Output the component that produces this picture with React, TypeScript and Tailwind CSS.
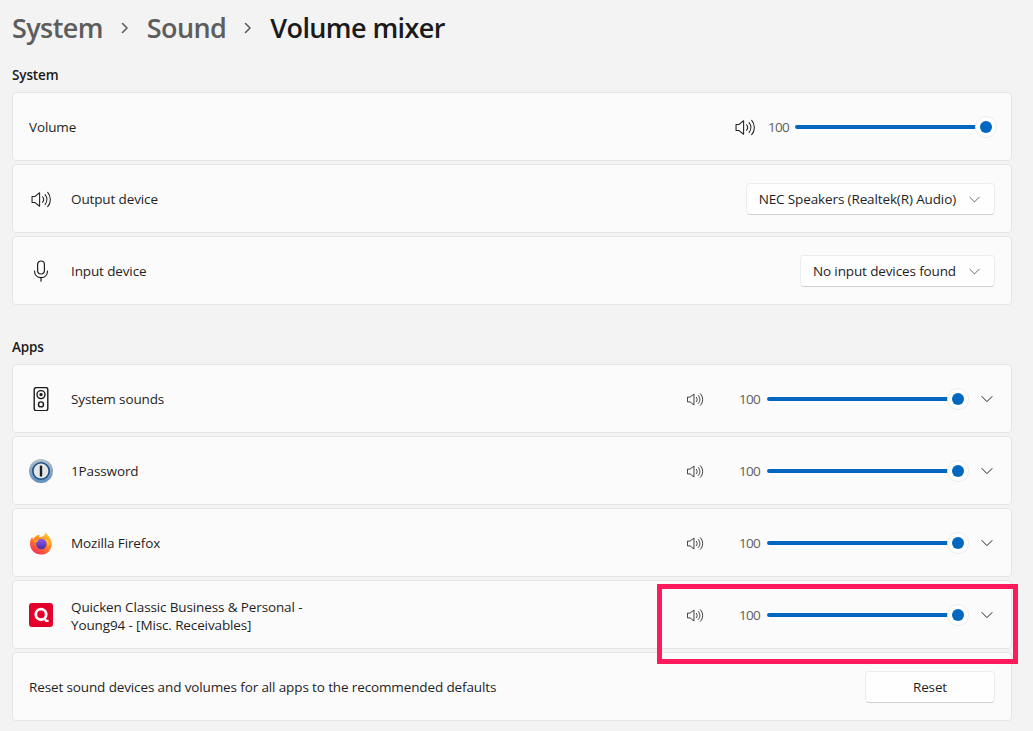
import React from 'react';

const SpeakerIcon: React.FC<{ size: number }> = ({ size }) => (
  <svg width={size} height={size} viewBox="0 0 20 20" fill="none" stroke="#1f1f1f" strokeWidth={size > 16 ? 1 : 1.2} strokeLinejoin="round" strokeLinecap="round">
    <path d="M1 7.2h2.6L8.2 3.6v12.8L3.6 12.8H1z" />
    <path d="M11 7.4c1.3 1.5 1.3 3.7 0 5.2" />
    <path d="M13.4 5.4c2.3 2.7 2.3 6.5 0 9.2" />
    <path d="M15.9 3.2c3.4 3.9 3.4 9.7 0 13.6" />
  </svg>
);

const MicIcon = () => (
  <svg width="24" height="24" viewBox="0 0 24 24" fill="none" stroke="#1f1f1f" strokeWidth="1.2" strokeLinecap="round">
    <rect x="8.6" y="2" width="6.8" height="13" rx="3.4" />
    <path d="M5.5 12c0 4 2.8 6.6 6.5 6.6s6.5-2.6 6.5-6.6" />
    <path d="M12 18.6v3.6" />
  </svg>
);

const SpeakerBoxIcon = () => (
  <svg width="24" height="24" viewBox="0 0 24 24" fill="none" stroke="#1a1a1a" strokeWidth="1.4">
    <rect x="5.2" y="0.6" width="13.6" height="23" rx="2" />
    <circle cx="12" cy="7.6" r="4" />
    <circle cx="12" cy="7.6" r="1" fill="#1a1a1a" />
    <circle cx="12" cy="17.4" r="2.5" />
  </svg>
);

const OnePasswordIcon = () => (
  <svg width="24" height="24" viewBox="0 0 24 24">
    <defs>
      <linearGradient id="opRing" x1="0" y1="0" x2="0" y2="1">
        <stop offset="0" stopColor="#b4bfc9" />
        <stop offset="1" stopColor="#5f8fbd" />
      </linearGradient>
    </defs>
    <circle cx="12" cy="12" r="12" fill="url(#opRing)" />
    <circle cx="12" cy="12" r="9" fill="#1c4f86" />
    <circle cx="12" cy="12" r="7.4" fill="#e3e6e4" />
    <rect x="10.8" y="6.4" width="2.4" height="11.2" rx="1.2" fill="#16202b" />
  </svg>
);

const FirefoxIcon = () => (
  <svg width="24" height="24" viewBox="0 0 24 24">
    <defs>
      <linearGradient id="ffBody" x1="0.8" y1="0" x2="0.2" y2="1">
        <stop offset="0" stopColor="#ffd23a" />
        <stop offset="0.45" stopColor="#ff8a1f" />
        <stop offset="1" stopColor="#f5265c" />
      </linearGradient>
      <linearGradient id="ffGlobe" x1="0.5" y1="0" x2="0.5" y2="1">
        <stop offset="0" stopColor="#8a5cf0" />
        <stop offset="1" stopColor="#4b2ea8" />
      </linearGradient>
    </defs>
    <path d="M16.6 0.6c.6 2.6 2.2 3.4 3.6 5.4 1.5 2.1 2.6 4.4 2.6 6.9C22.8 19 18 23.6 12 23.6S1 19 1 12.6c0-2.6.7-4.8 2.2-6.6.1 1 .5 1.9 1.1 2.4C5.4 5.6 8.4 3.8 11 3.6c-.7 1-.9 2-.6 2.8 3.4-.4 6.4-2.6 6.2-5.8z" fill="url(#ffBody)" />
    <circle cx="12.4" cy="13" r="5.2" fill="url(#ffGlobe)" />
    <path d="M3.6 10.2c1.6-1.2 4.4-1.6 6.8-.4-1.6.2-2.6 1-3 2-1.4-.2-2.8-.8-3.8-1.6z" fill="#ff9a2a" />
    <path d="M15.6 7.4c2.4.6 4 2.8 4 5.4 0 1-.3 2-.8 2.8.1-3.4-1-6.2-3.2-8.2z" fill="#ffd43a" />
  </svg>
);

const QuickenIcon = () => (
  <svg width="24" height="24" viewBox="0 0 24 24">
    <rect width="24" height="24" rx="3" fill="#e4002b" />
    <circle cx="12" cy="11.4" r="5.2" fill="none" stroke="#fff" strokeWidth="2.8" />
    <path d="M14.8 15l2.4 2.8h2.4" fill="none" stroke="#fff" strokeWidth="2.2" />
  </svg>
);

const Chevron: React.FC<{ size?: number; color?: string }> = ({ size = 12, color = '#1f1f1f' }) => (
  <svg width={size} height={size} viewBox="0 0 12 12" fill="none" stroke={color} strokeWidth="1" strokeLinecap="round" strokeLinejoin="round">
    <path d="M1 3.6l5 5 5-5" />
  </svg>
);

const ChevronRight = () => (
  <svg width="10" height="12" viewBox="0 0 10 12" fill="none" stroke="#5d5d5d" strokeWidth="1.6" strokeLinecap="round" strokeLinejoin="round">
    <path d="M2.5 1.5L7 6l-4.5 4.5" />
  </svg>
);

const Slider = () => (
  <div className="relative flex h-[22px] w-[202px] items-center">
    <div className="h-[4px] w-[185px] rounded-full bg-[#0067c0]" />
    <div className="absolute right-0 top-0 flex h-[22px] w-[22px] items-center justify-center rounded-full border border-[#ececec] bg-white">
      <div className="h-[12px] w-[12px] rounded-full bg-[#0067c0]" />
    </div>
  </div>
);

const Card: React.FC<{ children: React.ReactNode; right?: string }> = ({ children, right = 'pr-[14px]' }) => (
  <div className={`flex h-[69px] items-center justify-between rounded-[4px] border border-[#e5e5e5] bg-[#fbfbfb] pl-4 pt-[1px] ${right}`}>
    {children}
  </div>
);

const Dropdown: React.FC<{ label: string }> = ({ label }) => (
  <div className="flex h-[32px] items-center rounded-[4px] border border-[#ececec] border-b-[#d0d0d0] bg-[#fefefe] pl-[12px] pr-[14px] text-[#1f1f1f]">
    <span>{label}</span>
    <span className="ml-[13px]"><Chevron size={11} color="#5c5c5c" /></span>
  </div>
);

const Volume = () => (
  <span className="w-[27px] text-[#5f5f5f] tracking-[-0.7px]">100</span>
);

const AppRow: React.FC<{ icon: React.ReactNode; children: React.ReactNode }> = ({ icon, children }) => (
  <Card>
    <div className="flex items-center">
      <div className="flex h-[24px] w-[24px] items-center justify-center">{icon}</div>
      <div className="ml-[18px] leading-[18px] text-[#1f1f1f]">{children}</div>
    </div>
    <div className="flex items-center">
      <SpeakerIcon size={17} />
      <span className="ml-[35px] mr-[1px] flex"><Volume /></span>
      <Slider />
      <span className="ml-[10px] mr-[2px] flex w-[16px] justify-center"><Chevron size={12} /></span>
    </div>
  </Card>
);

export default function App() {
  return (
    <div className="h-[731px] w-[1033px] overflow-hidden bg-[#f3f3f3] pl-[12px] pr-[21px] text-[13.5px] leading-[20px] tracking-[-0.125px] font-['Open_Sans','Noto_Sans',sans-serif]">
      <div className="flex h-[56px] items-center text-[27px] leading-[36px] font-semibold tracking-[-0.6px]">
        <span className="text-[#5d5d5d]">System</span>
        <span className="mx-[17px] flex"><ChevronRight /></span>
        <span className="text-[#5d5d5d]">Sound</span>
        <span className="mx-[17px] flex"><ChevronRight /></span>
        <span className="text-[#1a1a1a]">Volume mixer</span>
      </div>

      <h2 className="flex h-[36px] items-center pt-[2px] font-semibold text-[#1a1a1a]">System</h2>
      <div className="flex flex-col gap-[3px]">
        <Card>
          <span className="text-[#1f1f1f]">Volume</span>
          <div className="flex items-center">
            <SpeakerIcon size={21} />
            <span className="ml-[12px] flex"><Volume /></span>
            <Slider />
          </div>
        </Card>
        <Card right="pr-4">
          <div className="flex items-center">
            <div className="flex h-[24px] w-[24px] items-center justify-center"><SpeakerIcon size={21} /></div>
            <span className="ml-[18px] text-[#1f1f1f]">Output device</span>
          </div>
          <Dropdown label="NEC Speakers (Realtek(R) Audio)" />
        </Card>
        <Card right="pr-4">
          <div className="flex items-center">
            <MicIcon />
            <span className="ml-[18px] text-[#1f1f1f]">Input device</span>
          </div>
          <Dropdown label="No input devices found" />
        </Card>
      </div>

      <h2 className="mt-[23px] flex h-[36px] items-center pt-[2px] font-semibold text-[#1a1a1a]">Apps</h2>
      <div className="flex flex-col gap-[3px]">
        <AppRow icon={<SpeakerBoxIcon />}>System sounds</AppRow>
        <AppRow icon={<OnePasswordIcon />}>1Password</AppRow>
        <AppRow icon={<FirefoxIcon />}>Mozilla Firefox</AppRow>
        <AppRow icon={<QuickenIcon />}>
          <div className="pt-[2px]">Quicken Classic Business &amp; Personal -</div>
          <div>Young94 - [Misc. Receivables]</div>
        </AppRow>
        <Card right="pr-4">
          <span className="text-[#1f1f1f]">Reset sound devices and volumes for all apps to the recommended defaults</span>
          <div className="flex h-[32px] w-[130px] items-center justify-center rounded-[4px] border border-[#ececec] border-b-[#d0d0d0] bg-[#fefefe] text-[#1f1f1f]">Reset</div>
        </Card>
      </div>

      {/* highlight drawn over the last app row */}
      <div className="absolute left-[657px] top-[584px] h-[80px] w-[361px] border-[5px] border-[#ff1a5c]" />
    </div>
  );
}
